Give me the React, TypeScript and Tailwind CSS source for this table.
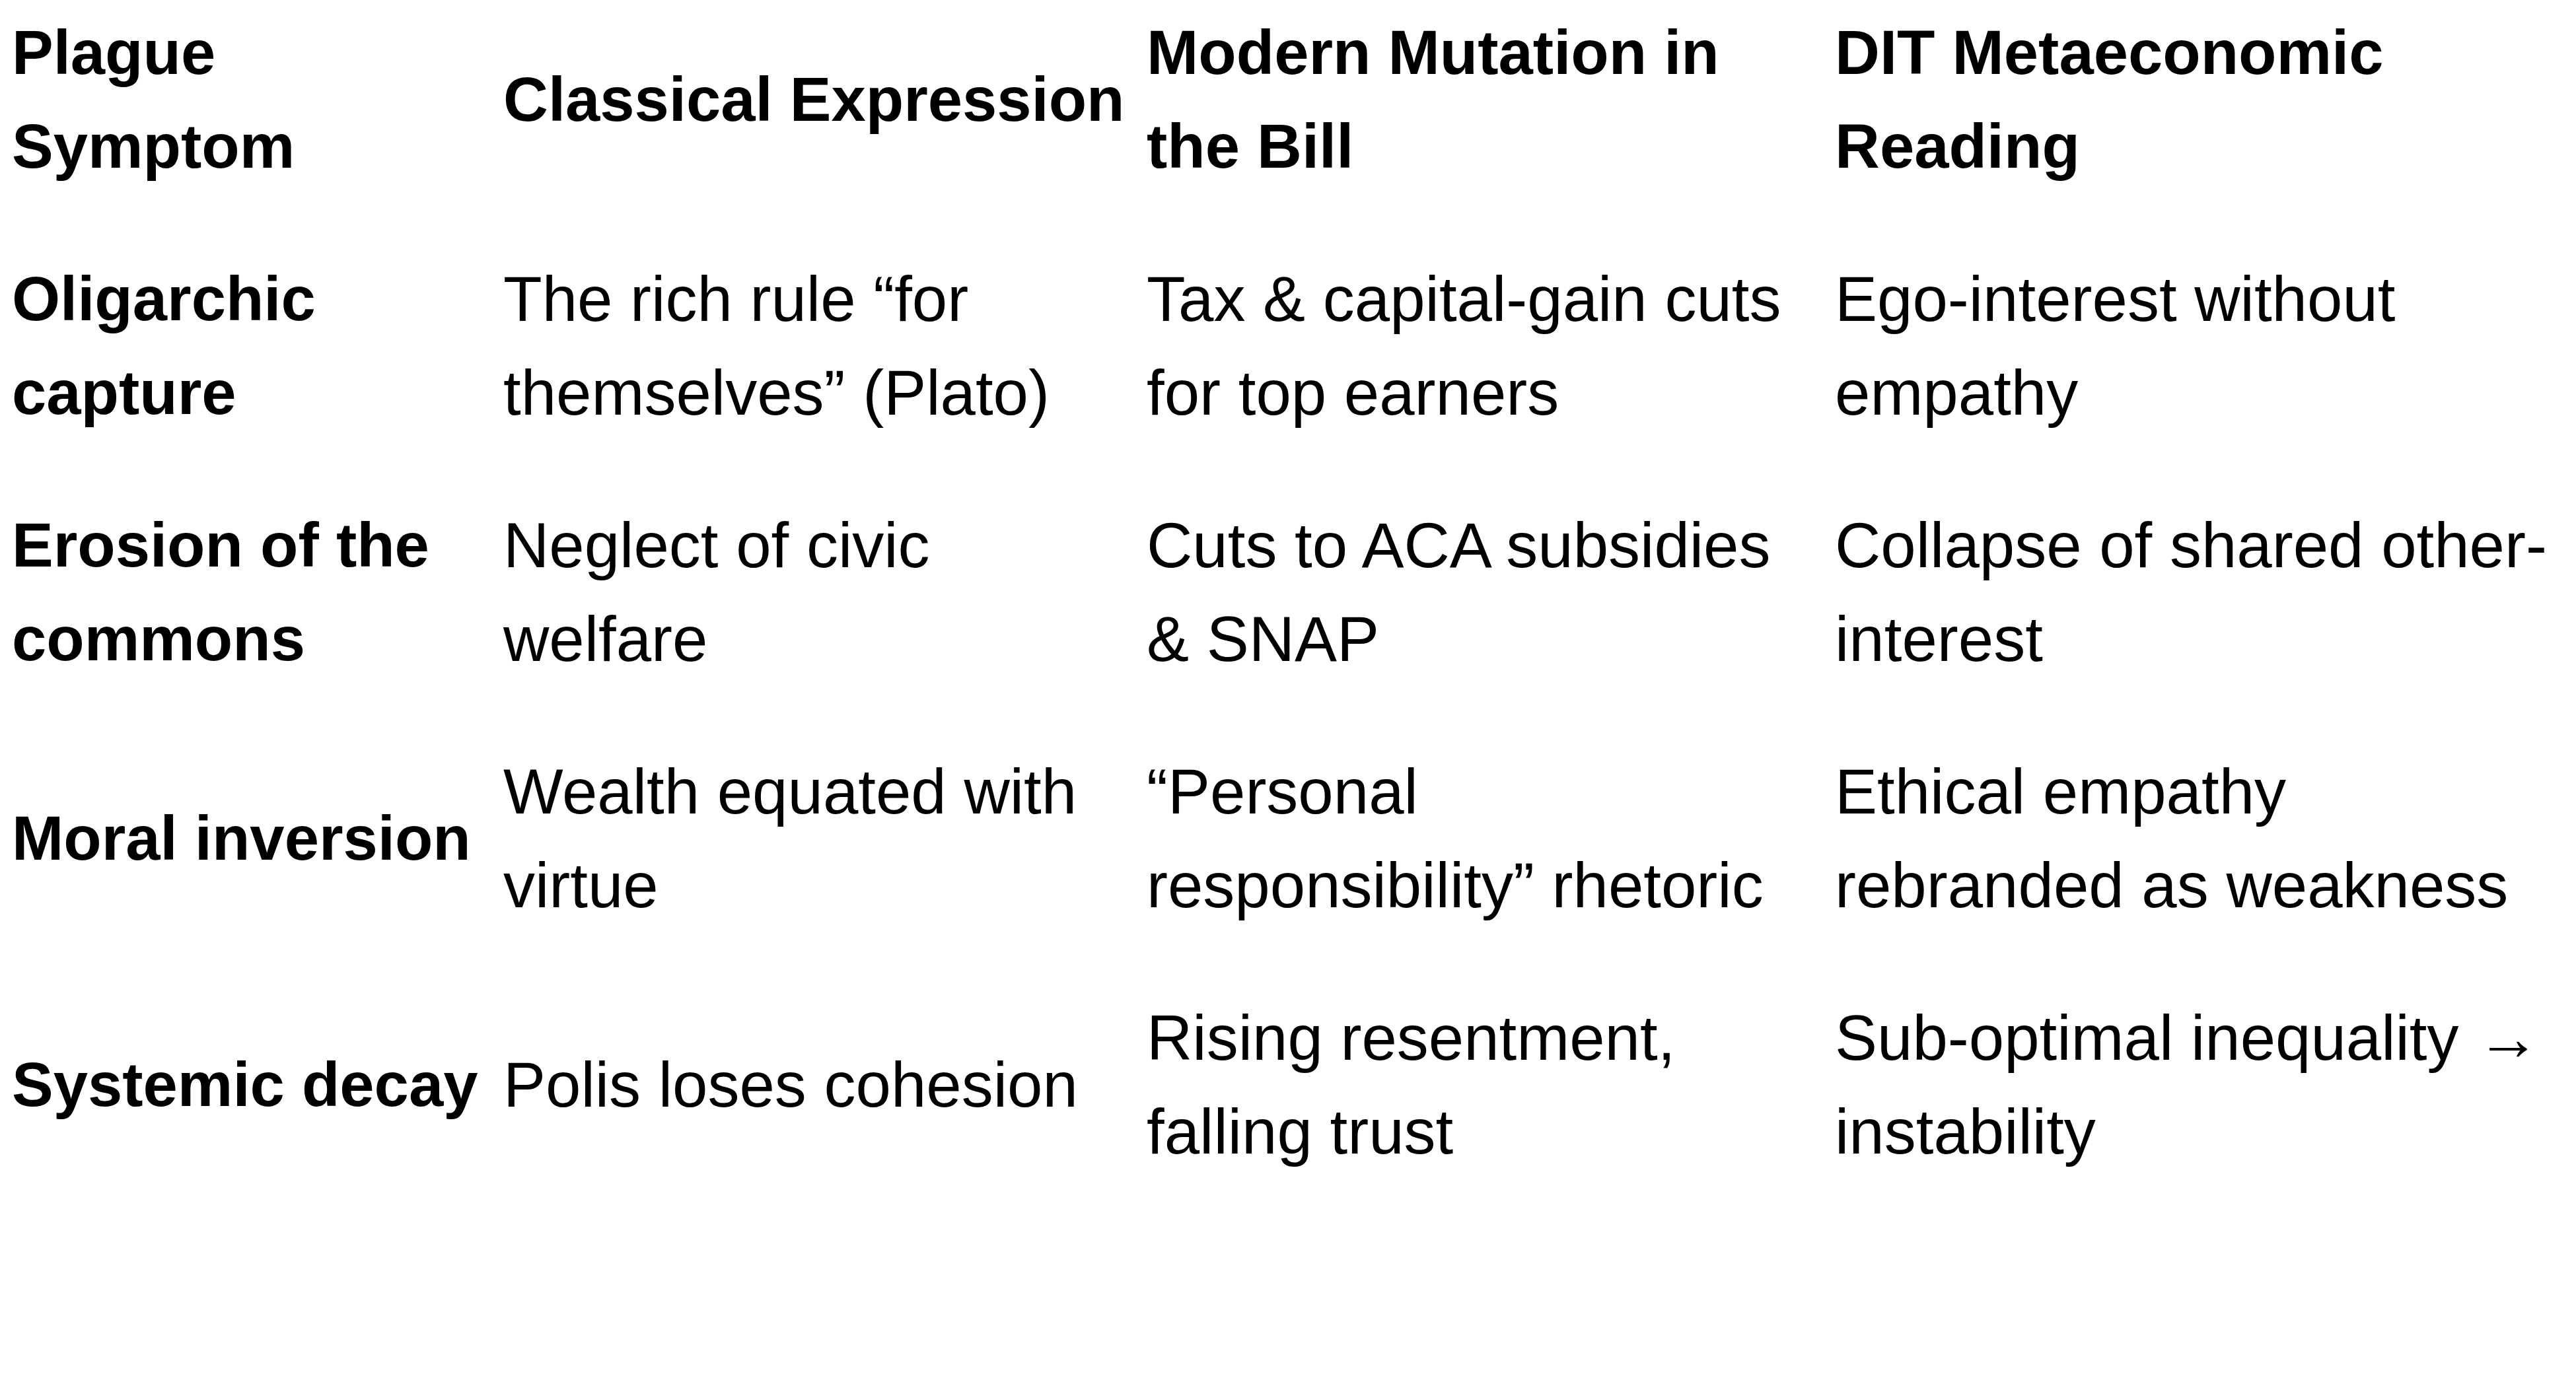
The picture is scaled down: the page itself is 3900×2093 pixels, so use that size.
const rows: { cells: string[][]; bold?: boolean }[] = [
  {
    bold: true,
    cells: [
      ["Plague", "Symptom"],
      ["Classical Expression"],
      ["Modern Mutation in", "the Bill"],
      ["DIT Metaeconomic", "Reading"],
    ],
  },
  {
    cells: [
      ["Oligarchic", "capture"],
      ["The rich rule \u201cfor", "themselves\u201d (Plato)"],
      ["Tax & capital-gain cuts", "for top earners"],
      ["Ego-interest without", "empathy"],
    ],
  },
  {
    cells: [
      ["Erosion of the", "commons"],
      ["Neglect of civic", "welfare"],
      ["Cuts to ACA subsidies", "& SNAP"],
      ["Collapse of shared other-", "interest"],
    ],
  },
  {
    cells: [
      ["Moral inversion"],
      ["Wealth equated with", "virtue"],
      ["\u201cPersonal", "responsibility\u201d rhetoric"],
      ["Ethical empathy", "rebranded as weakness"],
    ],
  },
  {
    cells: [
      ["Systemic decay"],
      ["Polis loses cohesion"],
      ["Rising resentment,", "falling trust"],
      ["Sub-optimal inequality\u00a0\u2192", "instability"],
    ],
  },
];

export default function App() {
  return (
    <div className="min-h-screen w-full bg-white text-black font-['Liberation_Sans',Arial,sans-serif] leading-[142px] pl-[18px]">
      {rows.map((row, i) => (
        <div
          key={i}
          className="grid grid-cols-[744px_974px_1042px_1fr] items-center pt-[9px] pb-[80px]"
        >
          {row.cells.map((lines, j) => (
            <div
              key={j}
              className={`whitespace-nowrap ${
                row.bold || j === 0
                  ? "font-bold text-[94px]"
                  : "font-normal text-[96px]"
              }`}
            >
              {lines.map((l, k) => (
                <div key={k}>{l}</div>
              ))}
            </div>
          ))}
        </div>
      ))}
    </div>
  );
}
